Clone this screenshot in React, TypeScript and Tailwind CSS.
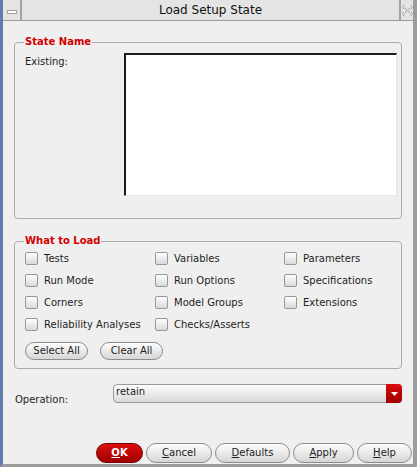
import React from "react";

const font = { fontFamily: '"DejaVu Sans", Verdana, sans-serif' };

const Check: React.FC<{ label: string }> = ({ label }) => (
  <label className="flex items-center h-[22px] gap-[6px] text-[10px] text-[#1e1e1e] whitespace-nowrap">
    <span className="w-[13px] h-[13px] rounded-[2px] border border-[#979797] bg-gradient-to-b from-[#ffffff] to-[#d9d9d9] shrink-0" />
    {label}
  </label>
);

const Pill: React.FC<{ cls: string; children: React.ReactNode; red?: boolean }> = ({ cls, children, red }) => (
  <button
    className={
      red
        ? `${cls} rounded-full border border-[#7a0000] bg-gradient-to-b from-[#dc1010] to-[#a00000] text-white font-bold text-[10px] leading-none`
        : `${cls} rounded-full border border-[#8c8c8c] bg-gradient-to-b from-[#fdfdfd] to-[#d6d6d6] text-[#1e1e1e] text-[10px] leading-none`
    }
  >
    {children}
  </button>
);

const rows = [
  ["Tests", "Variables", "Parameters"],
  ["Run Mode", "Run Options", "Specifications"],
  ["Corners", "Model Groups", "Extensions"],
  ["Reliability Analyses", "Checks/Asserts", ""],
];

export default function App() {
  return (
    <div style={font} className="w-[417px] h-[467px] flex flex-col bg-[#efefef] border-l-[3px] border-l-[#5f7cab] border-r-[4px] border-r-[#9c9c9c] border-b-[3px] border-b-[#9c9c9c]">
      {/* title bar */}
      <div className="h-[21px] flex bg-[#e4e4e4] border-b border-[#9a9a9a] shrink-0">
        <div className="w-[19px] border-r-2 border-[#a3a3a3] flex items-center justify-center">
          <span className="w-[10px] h-[4px] border border-[#9c9c9c] bg-white mt-[4px]" />
        </div>
        <div className="flex-1 flex items-center justify-center text-[12px] text-[#111]">Load Setup State</div>
        <div className="w-[14px] border-l-2 border-[#a3a3a3] flex items-center justify-center">
          <svg width="11" height="11" viewBox="0 0 11 11" shapeRendering="crispEdges">
            {[
              [1, 0], [2, 1], [0, 2], [1, 3], [3, 3], [4, 4], [6, 4], [7, 3], [9, 3], [8, 1], [9, 0], [10, 2],
              [5, 5], [4, 6], [6, 6], [3, 7], [7, 7], [1, 7], [9, 7], [0, 8], [10, 8], [2, 9], [8, 9], [1, 10], [9, 10],
            ].map(([x, y], i) => (
              <rect key={i} x={x} y={y} width="1" height="1" fill="#a0a0a0" />
            ))}
          </svg>
        </div>
      </div>

      <div className="flex-1 flex flex-col px-[11px]">
        {/* State Name */}
        <fieldset className="mt-[15px] border border-[#ababab] rounded-[4px] pl-[10px] pr-[4px] pb-[22px]">
          <legend className="px-[1px] -ml-[1px] text-[10px] leading-[12px] font-bold text-[#d40000]">State Name</legend>
          <div className="flex pt-[5px]">
            <div className="w-[99px] mt-[3px] text-[10px] leading-[12px] text-[#1e1e1e]">Existing:</div>
            <div className="flex-1 h-[143px] bg-white border-t-2 border-l-2 border-t-[#1a1a1a] border-l-[#1a1a1a] border-r border-b border-r-[#e6e6e6] border-b-[#e6e6e6]" />
          </div>
        </fieldset>

        {/* What to Load */}
        <fieldset className="mt-[16px] border border-[#ababab] rounded-[4px] pl-[10px] pr-[4px] pb-[8px]">
          <legend className="px-[1px] -ml-[1px] text-[10px] leading-[12px] font-bold text-[#d40000]">What to Load</legend>
          <div className="grid grid-cols-[130px_129px_1fr]">
            {rows.flat().map((l, i) => (l ? <Check key={i} label={l} /> : <span key={i} />))}
          </div>
          <div className="flex gap-[12px] mt-[7px]">
            <Pill cls="w-[63px] h-[18px]">Select All</Pill>
            <Pill cls="w-[63px] h-[18px]">Clear All</Pill>
          </div>
        </fieldset>

        {/* Operation */}
        <div className="flex items-start mt-[15px] pl-[1px]">
          <div className="w-[98px] text-[10px] leading-[12px] text-[#1e1e1e] mt-[10px]">Operation:</div>
          <div className="flex-1 h-[19px] flex rounded-[4px] border border-[#9a9a9a] bg-gradient-to-b from-[#fdfdfd] to-[#d9d9d9]">
            <span className="flex-1 text-[10px] leading-[14px] pl-[2px] text-[#1e1e1e]">retain</span>
            <span className="w-[16px] -my-px -mr-px rounded-r-[4px] bg-gradient-to-b from-[#d80e0e] to-[#a00000] flex items-center justify-center">
              <svg width="7" height="4" viewBox="0 0 7 4">
                <path d="M0 0h7L3.5 4z" fill="#fff" />
              </svg>
            </span>
          </div>
        </div>

        {/* buttons */}
        <div className="mt-auto mb-[1px] flex justify-end gap-[3px] pr-[1px] -mr-[11px]">
          <Pill cls="w-[47px] h-[20px]" red>
            <u>O</u>K
          </Pill>
          <Pill cls="w-[66px] h-[20px]">
            <u>C</u>ancel
          </Pill>
          <Pill cls="w-[75px] h-[20px]">
            <u>D</u>efaults
          </Pill>
          <Pill cls="w-[61px] h-[20px]">
            <u>A</u>pply
          </Pill>
          <Pill cls="w-[55px] h-[20px]">
            <u>H</u>elp
          </Pill>
        </div>
      </div>
    </div>
  );
}
